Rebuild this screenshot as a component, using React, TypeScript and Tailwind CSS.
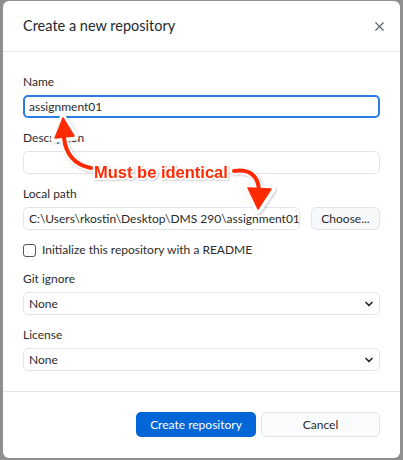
import { X, ChevronDown } from "lucide-react";

const font = { fontFamily: 'Lato, "Noto Sans", sans-serif' };

function Label({ children, className = "" }: { children: React.ReactNode; className?: string }) {
  return <div className={"text-[12px] leading-[16px] text-[#2b2b2b] " + className}>{children}</div>;
}

function Field({ value, focused = false, className = "" }: { value?: string; focused?: boolean; className?: string }) {
  return (
    <div
      className={
        "flex h-[23px] min-w-0 items-center overflow-hidden whitespace-nowrap rounded-[5px] bg-white text-[12px] text-[#2b2b2b] " +
        (focused ? "border-2 border-[#2a7de8] px-[4px]" : "border border-[#e1e4e8] px-[5px]") +
        " " +
        className
      }
    >
      {value}
    </div>
  );
}

function Select({ value }: { value: string }) {
  return (
    <div className="mt-[5px] flex h-[23px] items-center justify-between rounded-[5px] border border-[#e1e4e8] bg-white pl-[5px] pr-[4px] text-[12px] text-[#2b2b2b]">
      <span>{value}</span>
      <ChevronDown size={12} strokeWidth={3.5} className="text-[#24292e]" />
    </div>
  );
}

function Annotation() {
  return (
    <svg className="pointer-events-none absolute left-0 top-0" width="403" height="460" viewBox="0 0 403 460">
      <defs>
        <filter id="sh" x="-20%" y="-20%" width="140%" height="140%">
          <feDropShadow dx="1" dy="1" stdDeviation="1" floodColor="#000" floodOpacity="0.25" />
        </filter>
      </defs>
      <g filter="url(#sh)">
        <g stroke="#fff" strokeWidth="7" strokeLinecap="round" strokeLinejoin="round" fill="#fff">
          <path d="M91 168 C 76 165, 66 156, 64 138" fill="none" />
          <polygon points="63,118 54,139 75,137" />
          <path d="M234 171 C 248 169, 258 174, 259 190" fill="none" />
          <polygon points="247,188 272,189 258,210" />
        </g>
        <g stroke="#ff2b06" strokeWidth="4" strokeLinecap="round" strokeLinejoin="round" fill="#ff2b06">
          <path d="M91 168 C 76 165, 66 156, 64 138" fill="none" />
          <polygon points="63,118 55,138 74,136" strokeWidth="1.5" />
          <path d="M234 171 C 248 169, 258 174, 259 190" fill="none" />
          <polygon points="248,188 271,189 258,209" strokeWidth="1.5" />
        </g>
        <text
          x="94"
          y="178"
          fontFamily='"Liberation Sans", Arial, sans-serif'
          fontWeight="700"
          fontSize="16.5"
          fill="#ff2b06"
          stroke="#fff"
          strokeWidth="3"
          paintOrder="stroke"
        >
          Must be identical
        </text>
      </g>
    </svg>
  );
}

export default function App() {
  return (
    <div className="relative h-[460px] w-[403px] overflow-hidden bg-[#8f8f8f] pl-[3px] pt-px" style={font}>
      <div className="flex h-[457px] w-[397px] flex-col rounded-[6px] bg-white">
        <div className="flex h-[51px] items-center justify-between border-b border-[#e1e4e8] pl-[20px] pr-[13px]">
          <span className="text-[14.5px] text-[#24292e]">Create a new repository</span>
          <X size={15} strokeWidth={1.8} className="text-[#586069]" />
        </div>

        <div className="flex flex-col border-b border-[#e1e4e8] px-[20px] pb-[20px] pt-[22px]">
          <Label>Name</Label>
          <Field value="assignment01" focused className="mt-[5px]" />

          <Label className="mt-[12px]">Description</Label>
          <Field className="mt-[5px]" />

          <Label className="mt-[12px]">Local path</Label>
          <div className="mt-[5px] flex gap-[11px]">
            <Field value="C:\Users\rkostin\Desktop\DMS 290\assignment01" className="flex-1" />
            <div className="flex h-[23px] w-[69px] shrink-0 items-center justify-center rounded-[5px] border border-[#e1e4e8] bg-[#f6f8fa] text-[12px] text-[#2b2b2b]">
              Choose...
            </div>
          </div>

          <label className="mt-[12px] flex h-[16px] items-center gap-[6px] text-[12px] text-[#2b2b2b]">
            <span className="h-[13px] w-[13px] rounded-[3px] border border-[#555] bg-white" />
            Initialize this repository with a README
          </label>

          <Label className="mt-[13px]">Git ignore</Label>
          <Select value="None" />

          <Label className="mt-[12px]">License</Label>
          <Select value="None" />
        </div>

        <div className="flex justify-end gap-[5px] px-[20px] pt-[20px]">
          <div className="flex h-[25px] w-[120px] items-center justify-center rounded-[5px] bg-[#0366d6] text-[12px] text-white">
            Create repository
          </div>
          <div className="flex h-[25px] w-[119px] items-center justify-center rounded-[5px] border border-[#e1e4e8] bg-[#fafbfc] text-[12px] text-[#2b2b2b]">
            Cancel
          </div>
        </div>
      </div>
      <Annotation />
    </div>
  );
}
